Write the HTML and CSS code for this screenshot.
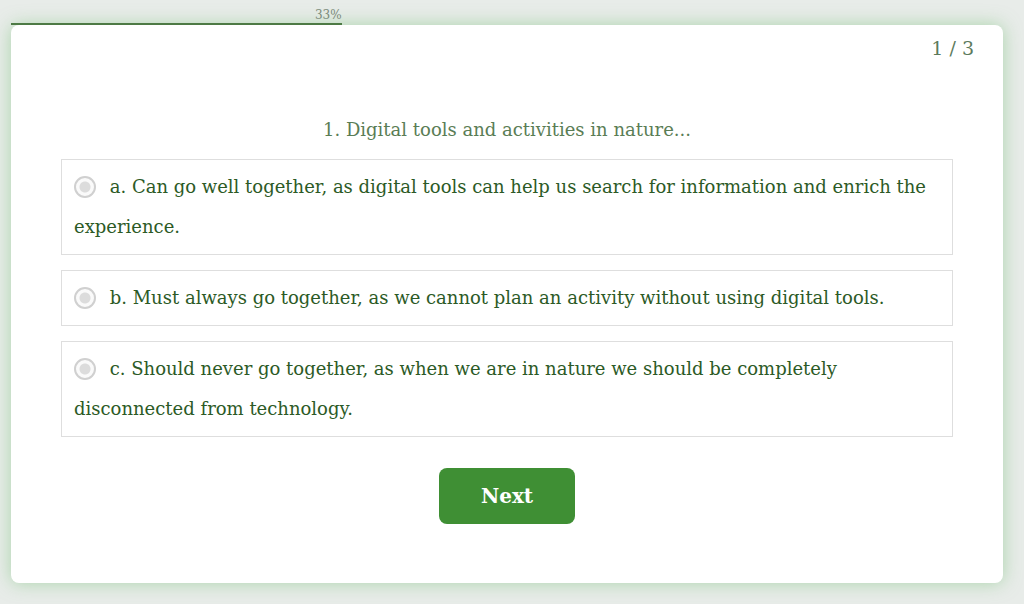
FILE: index.html
```html
<!DOCTYPE html>
<html lang="en">
<head>
  <meta charset="UTF-8" />
  <meta name="viewport" content="width=device-width, initial-scale=1.0" />
  <title>Quiz</title>
  <link rel="stylesheet" href="styles.css">
</head>
<body>

<div class="quiz">
  <div class="progress">
    <div class="progress-bar" style="width: 33.33%">
      <span class="progress-label">33%</span>
    </div>
  </div>

  <div class="card">
    <div class="counter">1 / 3</div>
    <h2 class="question">1. Digital tools and activities in nature...</h2>

    <label class="option">
      <span class="radio"></span>
      a. Can go well together, as digital tools can help us search for information and enrich the experience.
    </label>
    <label class="option">
      <span class="radio"></span>
      b. Must always go together, as we cannot plan an activity without using digital tools.
    </label>
    <label class="option">
      <span class="radio"></span>
      c. Should never go together, as when we are in nature we should be completely disconnected from technology.
    </label>

    <div class="actions">
      <a href="#" class="button">Next</a>
    </div>
  </div>
</div>

</body>
</html>
```

FILE: styles.css
```css
body {
  font-family: "DejaVu Serif", "Liberation Serif", serif;
  background-color: #e8ece9;
  color: #2f5e2a;
  margin: 0;
}
.quiz {
  padding: 8px 21px 21px 11px;
}
.progress {
  height: 17px;
}
.progress-bar {
  position: relative;
  height: 100%;
  border-bottom: 2px solid #4d7a45;
  box-sizing: border-box;
}
.progress-label {
  position: absolute;
  right: 0;
  top: 0;
  font-size: 12px;
  color: #7a8a7a;
}
.card {
  background-color: #ffffff;
  border-radius: 8px;
  padding: 12px 50px 59px;
  box-shadow: 0 0 18px rgba(110, 190, 110, 0.5);
}
.counter {
  text-align: right;
  margin-right: -21px;
  font-size: 19px;
  color: #5c7a5c;
}
.question {
  text-align: center;
  font-weight: normal;
  font-size: 18px;
  color: #5a7d55;
  margin: 60px 0 19px;
}
.option {
  display: block;
  border: 1px solid #dedede;
  padding: 7px 12px;
  margin-bottom: 15px;
  font-size: 18px;
  line-height: 40px;
  color: #2c5a26;
}
.radio {
  display: inline-block;
  vertical-align: -5px;
  width: 18px;
  height: 18px;
  border: 2px solid #d0d0d0;
  border-radius: 50%;
  margin-right: 8px;
  background: radial-gradient(circle, #dcdcdc 0 5px, #fafafa 6px);
}
.actions {
  text-align: center;
  padding-top: 16px;
}
.button {
  display: inline-block;
  background-color: #3f8f34;
  color: white;
  font-weight: bold;
  font-size: 20px;
  padding: 16px 42px;
  text-decoration: none;
  border-radius: 8px;
}
```
